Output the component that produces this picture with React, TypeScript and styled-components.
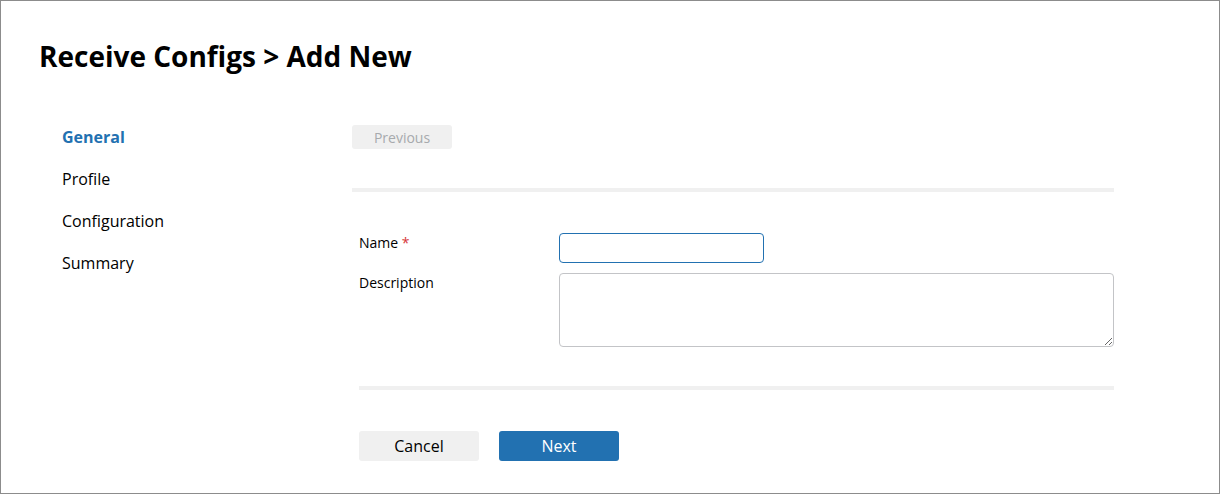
import React from "react";
import styled, { createGlobalStyle } from "styled-components";

const GlobalStyle = createGlobalStyle`
  * {
    box-sizing: border-box;
  }
  body {
    margin: 0;
    background: #ffffff;
    font-family: "Open Sans", "Noto Sans", "Liberation Sans", sans-serif;
    color: #1d2327;
  }
`;

const PageFrame = styled.div`
  width: 1220px;
  height: 494px;
  border: 1px solid #8c8c8c;
  padding: 36px 0 0 38px;
`;

const Title = styled.h1`
  margin: 0;
  font-size: 28px;
  line-height: 38px;
  font-weight: 700;
  color: #000000;
`;

const Body = styled.div`
  display: flex;
  margin-top: 50px;
`;

const StepNav = styled.nav`
  display: flex;
  flex-direction: column;
  gap: 18px;
  width: 313px;
  padding-left: 23px;
`;

const StepItem = styled.div<{ $active?: boolean }>`
  font-size: 16px;
  line-height: 24px;
  font-weight: ${(p) => (p.$active ? 700 : 400)};
  color: ${(p) => (p.$active ? "#2271b1" : "#000000")};
`;

const MainColumn = styled.div`
  display: flex;
  flex-direction: column;
  width: 762px;
`;

const PrevButton = styled.button`
  width: 100px;
  height: 24px;
  border: none;
  border-radius: 3px;
  background: #f0f0f0;
  color: #a7aaad;
  font-family: inherit;
  font-size: 14px;
  padding: 0;
`;

const Divider = styled.div<{ $inset?: number }>`
  height: 4px;
  background: #f0f0f0;
  margin-top: 39px;
  margin-left: ${(p) => p.$inset || 0}px;
`;

const Form = styled.div`
  display: flex;
  flex-direction: column;
  gap: 10px;
  margin-top: 41px;
  padding-left: 7px;
`;

const FieldRow = styled.div`
  display: flex;
  align-items: flex-start;
`;

const FieldLabel = styled.label`
  width: 200px;
  font-size: 14px;
  line-height: 20px;
  color: #000000;
`;

const Required = styled.span`
  color: #d63638;
`;

const TextInput = styled.input`
  width: 205px;
  height: 30px;
  border: 1px solid #2271b1;
  border-radius: 4px;
  font-family: inherit;
  font-size: 14px;
  padding: 0 8px;
  outline: none;
`;

const TextArea = styled.textarea`
  width: 555px;
  height: 74px;
  border: 1px solid #c3c4c7;
  border-radius: 4px;
  font-family: inherit;
  font-size: 14px;
  padding: 6px 8px;
  outline: none;
`;

const Actions = styled.div`
  display: flex;
  gap: 20px;
  margin-top: 41px;
  padding-left: 7px;
`;

const ActionButton = styled.button<{ $primary?: boolean }>`
  width: 120px;
  height: 30px;
  border: none;
  border-radius: 3px;
  background: ${(p) => (p.$primary ? "#2271b1" : "#f0f0f0")};
  color: ${(p) => (p.$primary ? "#ffffff" : "#000000")};
  font-family: inherit;
  font-size: 16px;
  padding: 0;
`;

const steps = ["General", "Profile", "Configuration", "Summary"];

const App = () => {
  return (
    <>
      <GlobalStyle />
      <PageFrame>
        <Title>Receive Configs &gt; Add New</Title>
        <Body>
          <StepNav>
            {steps.map((step, index) => (
              <StepItem key={step} $active={index === 0}>
                {step}
              </StepItem>
            ))}
          </StepNav>
          <MainColumn>
            <div>
              <PrevButton disabled>Previous</PrevButton>
            </div>
            <Divider />
            <Form>
              <FieldRow>
                <FieldLabel>
                  Name <Required>*</Required>
                </FieldLabel>
                <TextInput type="text" />
              </FieldRow>
              <FieldRow>
                <FieldLabel>Description</FieldLabel>
                <TextArea />
              </FieldRow>
            </Form>
            <Divider $inset={7} />
            <Actions>
              <ActionButton>Cancel</ActionButton>
              <ActionButton $primary>Next</ActionButton>
            </Actions>
          </MainColumn>
        </Body>
      </PageFrame>
    </>
  );
};

export default App;
